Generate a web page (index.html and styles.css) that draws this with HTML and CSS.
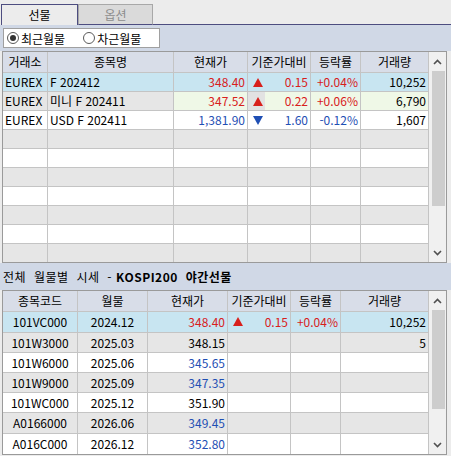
FILE: index.html
```html
<!DOCTYPE html>
<html lang="ko">
<head>
<meta charset="utf-8">
<link rel="stylesheet" href="styles.css">
</head>
<body>
<div class="tabs">
  <div class="tab active">선물</div>
  <div class="tab">옵션</div>
  <div class="tab-rest"></div>
</div>
<div class="radio-band">
  <div class="radio-box">
    <span class="radio checked"><span class="circle"></span>최근월물</span>
    <span class="radio"><span class="circle"></span>차근월물</span>
  </div>
</div>

<div class="grid g1">
  <div class="body">
    <div class="row head">
      <div class="c">거래소</div><div class="c">종목명</div><div class="c">현재가</div><div class="c">기준가대비</div><div class="c">등락률</div><div class="c">거래량</div>
    </div>
    <div class="row sel">
      <div class="c l">EUREX</div><div class="c l">F 202412</div><div class="c r up">348.40</div>
      <div class="c r up diff"><svg class="tri" width="10" height="9" viewBox="0 0 10 9"><polygon points="5,0 10,9 0,9" fill="#d8201c"/></svg>0.15</div>
      <div class="c r up">+0.04%</div><div class="c r">10,252</div>
    </div>
    <div class="row odd">
      <div class="c l">EUREX</div><div class="c l">미니 F 202411</div><div class="c r up hl">347.52</div>
      <div class="c r up diff hl"><span class="tribox"><svg class="tri" width="10" height="9" viewBox="0 0 10 9"><polygon points="5,0 10,9 0,9" fill="#d8201c"/></svg></span>0.22</div>
      <div class="c r up hl">+0.06%</div><div class="c r hl">6,790</div>
    </div>
    <div class="row even">
      <div class="c l">EUREX</div><div class="c l">USD F 202411</div><div class="c r dn">1,381.90</div>
      <div class="c r dn diff"><svg class="tri" width="10" height="9" viewBox="0 0 10 9"><polygon points="0,0 10,0 5,9" fill="#1f4fb4"/></svg>1.60</div>
      <div class="c r dn">-0.12%</div><div class="c r">1,607</div>
    </div>
    <div class="row odd"><div class="c"></div><div class="c"></div><div class="c"></div><div class="c"></div><div class="c"></div><div class="c"></div></div>
    <div class="row even"><div class="c"></div><div class="c"></div><div class="c"></div><div class="c"></div><div class="c"></div><div class="c"></div></div>
    <div class="row odd"><div class="c"></div><div class="c"></div><div class="c"></div><div class="c"></div><div class="c"></div><div class="c"></div></div>
    <div class="row even"><div class="c"></div><div class="c"></div><div class="c"></div><div class="c"></div><div class="c"></div><div class="c"></div></div>
    <div class="row odd"><div class="c"></div><div class="c"></div><div class="c"></div><div class="c"></div><div class="c"></div><div class="c"></div></div>
    <div class="row even"><div class="c"></div><div class="c"></div><div class="c"></div><div class="c"></div><div class="c"></div><div class="c"></div></div>
    <div class="row odd last"><div class="c"></div><div class="c"></div><div class="c"></div><div class="c"></div><div class="c"></div><div class="c"></div></div>
  </div>
  <div class="scroll">
    <div class="sbtn"><svg width="9" height="6" viewBox="0 0 9 6"><polyline points="1,5 4.5,1.5 8,5" fill="none" stroke="#505050" stroke-width="1.6"/></svg></div>
    <div class="track"><div class="thumb t1"></div></div>
    <div class="sbtn"><svg width="9" height="6" viewBox="0 0 9 6"><polyline points="1,1 4.5,4.5 8,1" fill="none" stroke="#505050" stroke-width="1.6"/></svg></div>
  </div>
</div>

<div class="title-band">전체 월물별 시세 - <b>KOSPI200 야간선물</b></div>

<div class="grid g2">
  <div class="body">
    <div class="row head">
      <div class="c">종목코드</div><div class="c">월물</div><div class="c">현재가</div><div class="c">기준가대비</div><div class="c">등락률</div><div class="c">거래량</div>
    </div>
    <div class="row sel tall">
      <div class="c m">101VC000</div><div class="c m">2024.12</div><div class="c r up">348.40</div>
      <div class="c r up diff"><svg class="tri" width="10" height="9" viewBox="0 0 10 9"><polygon points="5,0 10,9 0,9" fill="#d8201c"/></svg>0.15</div>
      <div class="c r up">+0.04%</div><div class="c r">10,252</div>
    </div>
    <div class="row odd">
      <div class="c m">101W3000</div><div class="c m">2025.03</div><div class="c r">348.15</div>
      <div class="c"></div><div class="c"></div><div class="c r">5</div>
    </div>
    <div class="row even">
      <div class="c m">101W6000</div><div class="c m">2025.06</div><div class="c r dn">345.65</div>
      <div class="c"></div><div class="c"></div><div class="c"></div>
    </div>
    <div class="row odd">
      <div class="c m">101W9000</div><div class="c m">2025.09</div><div class="c r dn">347.35</div>
      <div class="c"></div><div class="c"></div><div class="c"></div>
    </div>
    <div class="row even">
      <div class="c m">101WC000</div><div class="c m">2025.12</div><div class="c r">351.90</div>
      <div class="c"></div><div class="c"></div><div class="c"></div>
    </div>
    <div class="row odd tall">
      <div class="c m">A0166000</div><div class="c m">2026.06</div><div class="c r dn">349.45</div>
      <div class="c"></div><div class="c"></div><div class="c"></div>
    </div>
    <div class="row even last">
      <div class="c m">A016C000</div><div class="c m">2026.12</div><div class="c r dn">352.80</div>
      <div class="c"></div><div class="c"></div><div class="c"></div>
    </div>
  </div>
  <div class="scroll">
    <div class="sbtn"><svg width="9" height="6" viewBox="0 0 9 6"><polyline points="1,5 4.5,1.5 8,5" fill="none" stroke="#505050" stroke-width="1.6"/></svg></div>
    <div class="track"><div class="thumb t2"></div></div>
    <div class="sbtn"><svg width="9" height="6" viewBox="0 0 9 6"><polyline points="1,1 4.5,4.5 8,1" fill="none" stroke="#505050" stroke-width="1.6"/></svg></div>
  </div>
</div>
</body>
</html>
```
FILE: styles.css
```css
html, body {
  margin: 0;
  padding: 0;
  background: #ececec;
  width: 451px;
  height: 456px;
  overflow: hidden;
  font-family: "Noto Sans CJK KR", "Liberation Sans", sans-serif;
  font-size: 12px;
  color: #000;
}

.tabs {
  display: flex;
  align-items: stretch;
  height: 25px;
  padding-top: 4px;
  padding-left: 1px;
  box-sizing: border-box;
}
.tab {
  width: 75px;
  box-sizing: border-box;
  border: 1px solid #a8a8a8;
  border-bottom: 1px solid #4d4d80;
  background: #dadada;
  color: #8c8c8c;
  display: flex;
  align-items: center;
  justify-content: center;
  padding-bottom: 1px;
}
.tab.active {
  width: 77px;
  border: 1px solid #4d4d80;
  border-bottom: none;
  background: #ececec;
  color: #000;
}
.tab-rest {
  flex: 1;
  border-bottom: 1px solid #4d4d80;
}

.radio-band {
  background: #d0d8e6;
  height: 26px;
  padding: 3px 0 0 3px;
  box-sizing: border-box;
}
.radio-box {
  width: 157px;
  height: 20px;
  box-sizing: border-box;
  background: #fff;
  border: 1px solid #a0a0a0;
  display: flex;
  align-items: center;
  padding-left: 3px;
  gap: 18px;
}
.radio {
  display: flex;
  align-items: center;
  gap: 2px;
  white-space: nowrap;
}
.circle {
  width: 12px;
  height: 12px;
  border: 1px solid #5a5a5a;
  border-radius: 50%;
  box-sizing: border-box;
  background: #fff;
  position: relative;
}
.radio.checked .circle::after {
  content: "";
  position: absolute;
  left: 2px;
  top: 2px;
  width: 6px;
  height: 6px;
  border-radius: 50%;
  background: #333;
}

.grid {
  display: flex;
  margin-left: 2px;
  width: 445px;
  box-sizing: border-box;
  border: 1px solid #9a9a9a;
  background: #fff;
}
.body {
  width: 426px;
}
.row {
  display: grid;
  height: 19px;
  box-sizing: border-box;
  border-bottom: 1px solid #c4c4c4;
}
.row.last {
  border-bottom: none;
  height: 18px;
}
.g1 .row {
  grid-template-columns: 45px 126px 74px 63px 50px 68px;
}
.g2 .row {
  grid-template-columns: 75px 70px 80px 63px 50px 88px;
  height: 20px;
}
.g2 .row.tall { height: 21px; }
.g2 .row.last { height: 20px; }
.row.head {
  height: 21px;
  background: #d8dde8;
}
.g2 .row.head { height: 21px; }
.c {
  border-right: 1px solid #c4c4c4;
  display: flex;
  align-items: center;
  justify-content: center;
  white-space: nowrap;
  overflow: hidden;
  padding: 0 2px;
  line-height: 14px;
}
.c.l { justify-content: flex-start; }
.c.r { justify-content: flex-end; }
.c.m { justify-content: center; }
.row.sel { background: #c8e5f1; }
.row.odd { background: #e6e6e6; }
.row.even { background: #fff; }
.c.hl { background: #eff8e7; }
.up { color: #d8201c; }
.dn { color: #1f4fb4; }
.diff {
  position: relative;
}
.diff .tri {
  position: absolute;
  left: 5px;
  top: 5px;
}
.tribox {
  position: absolute;
  left: 0;
  top: 0;
  width: 17px;
  height: 100%;
  background: #e2e2e2;
}
.tribox .tri {
  left: 5px;
  top: 5px;
}

.scroll {
  width: 17px;
  display: flex;
  flex-direction: column;
  background: #f0f0f0;
}
.sbtn {
  height: 19px;
  display: flex;
  align-items: center;
  justify-content: center;
  flex: none;
}
.track {
  flex: 1;
  padding-left: 3px;
}
.thumb {
  width: 13px;
  background: #cdcdcd;
}
.t1 { height: 135px; }
.t2 { height: 99px; }

.title-band {
  background: #d0d8e6;
  height: 27px;
  display: flex;
  align-items: center;
  padding-left: 3px;
  word-spacing: 4px;
  letter-spacing: 0.5px;
  white-space: nowrap;
}
.title-band b {
  margin-left: 4px;
}
```
